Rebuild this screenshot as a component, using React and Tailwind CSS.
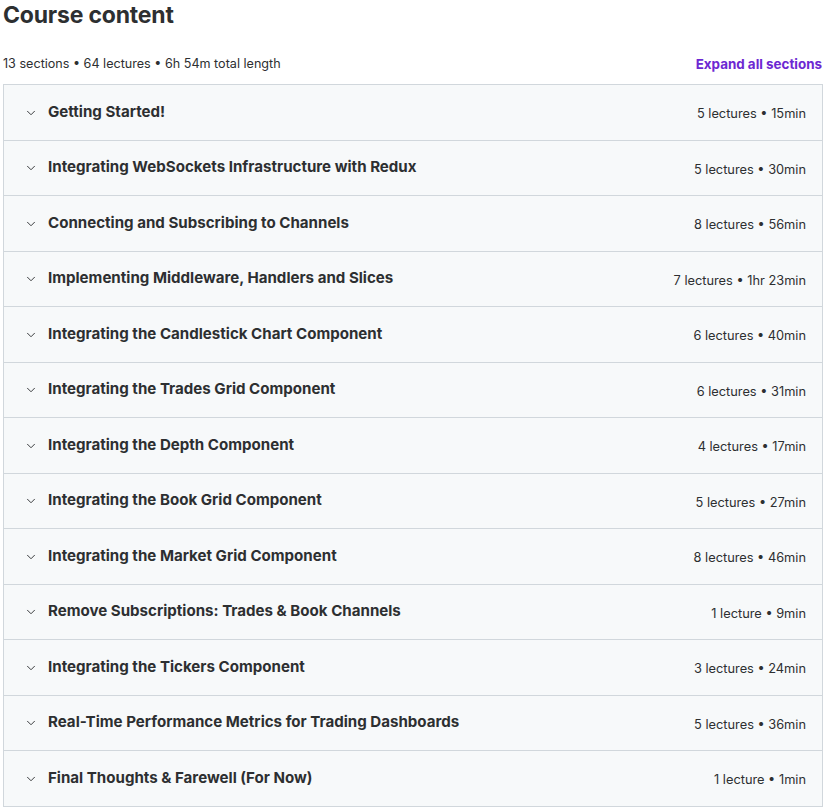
import { ChevronDown } from 'lucide-react';

const SECTIONS = [
  ['Getting Started!', '5 lectures • 15min'],
  ['Integrating WebSockets Infrastructure with Redux', '5 lectures • 30min'],
  ['Connecting and Subscribing to Channels', '8 lectures • 56min'],
  ['Implementing Middleware, Handlers and Slices', '7 lectures • 1hr 23min'],
  ['Integrating the Candlestick Chart Component', '6 lectures • 40min'],
  ['Integrating the Trades Grid Component', '6 lectures • 31min'],
  ['Integrating the Depth Component', '4 lectures • 17min'],
  ['Integrating the Book Grid Component', '5 lectures • 27min'],
  ['Integrating the Market Grid Component', '8 lectures • 46min'],
  ['Remove Subscriptions: Trades & Book Channels', '1 lecture • 9min'],
  ['Integrating the Tickers Component', '3 lectures • 24min'],
  ['Real-Time Performance Metrics for Trading Dashboards', '5 lectures • 36min'],
  ['Final Thoughts & Farewell (For Now)', '1 lecture • 1min'],
];

export default function App() {
  return (
    <div className="w-[826px] h-[808px] bg-white text-[#2d2f31] px-[3px]" style={{ fontFamily: 'Inter, "Noto Sans", sans-serif' }}>
      <h2 className="text-[23px] font-bold leading-[30px] tracking-[-0.2px]">Course content</h2>
      <div className="flex items-end justify-between mt-[26px] mb-[12px] text-[13px] leading-[16px]">
        <span className="text-[12.6px]">13 sections • 64 lectures • 6h 54m total length</span>
        <button className="font-bold text-[13.4px] text-[#6d28d2] pr-[1px]">Expand all sections</button>
      </div>
      <div className="border-x border-b border-[#d1d7dc] w-[820px]">
        {SECTIONS.map(([title, meta]) => (
          <div
            key={title}
            className="flex items-center h-[55.5px] bg-[#f7f9fa] pl-[20px] pr-[16px] border-t border-[#d1d7dc]"
          >
            <ChevronDown size={14} strokeWidth={1.6} className="mr-[10px] mt-[1px]" />
            <span className="font-bold text-[15.1px] flex-1">{title}</span>
            <span className="text-[12.8px] mt-[3px]">{meta}</span>
          </div>
        ))}
      </div>
    </div>
  );
}
